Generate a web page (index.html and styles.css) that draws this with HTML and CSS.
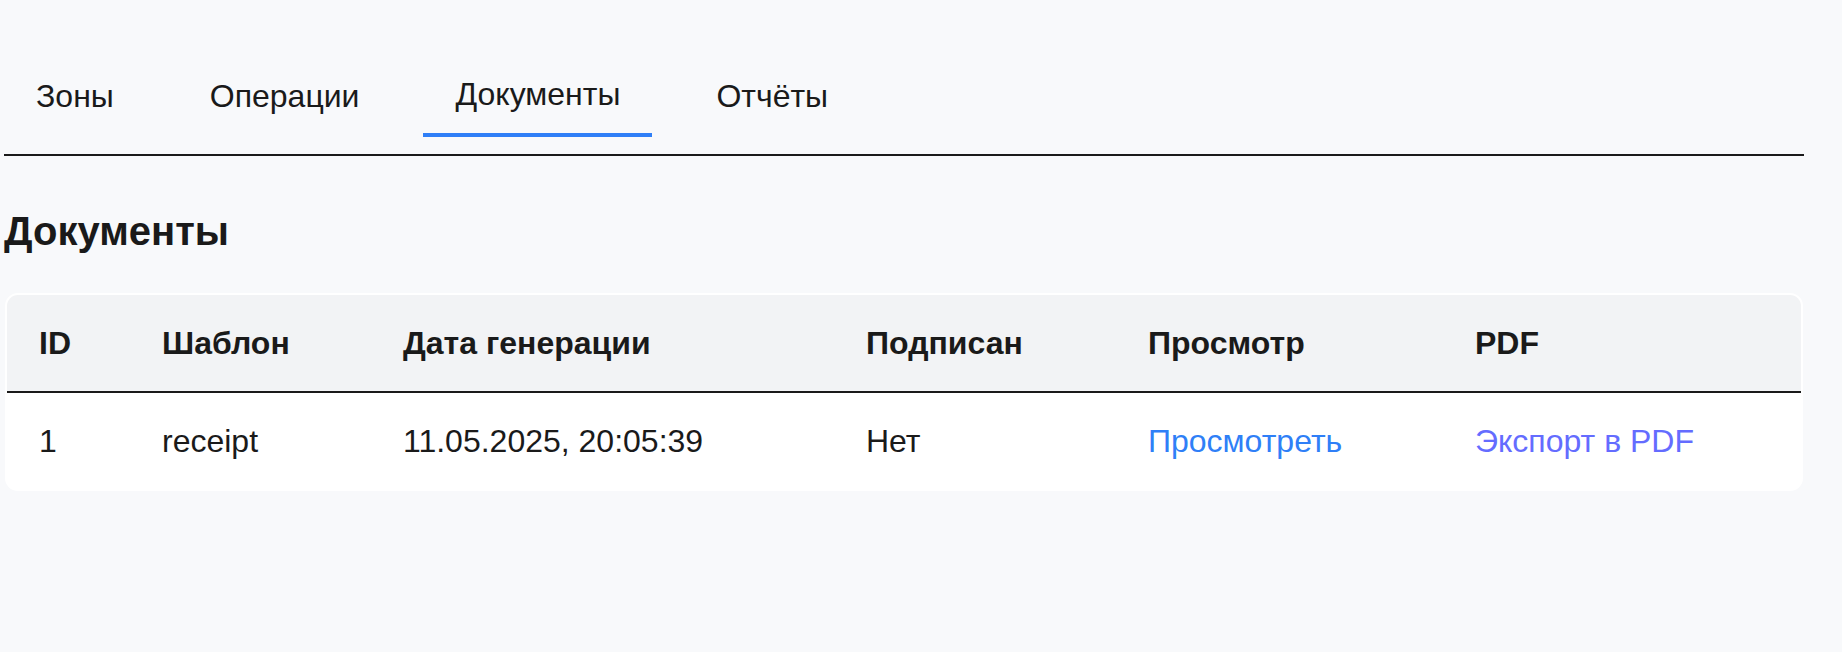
FILE: index.html
```html
<!DOCTYPE html>
<html lang="ru">
<head>
<meta charset="utf-8">
<title>Документы</title>
<link rel="stylesheet" href="styles.css">
</head>
<body>
<div class="page">
  <nav class="tabs">
    <a class="tab">Зоны</a>
    <a class="tab">Операции</a>
    <a class="tab tab-active">Документы</a>
    <a class="tab">Отчёты</a>
  </nav>
  <h2 class="title">Документы</h2>
  <div class="card">
    <table class="docs">
      <colgroup>
        <col class="c-id"><col class="c-tpl"><col class="c-date"><col class="c-sign"><col class="c-view"><col class="c-pdf">
      </colgroup>
      <thead>
        <tr><th>ID</th><th>Шаблон</th><th>Дата генерации</th><th>Подписан</th><th>Просмотр</th><th>PDF</th></tr>
      </thead>
      <tbody>
        <tr>
          <td>1</td><td>receipt</td><td>11.05.2025, 20:05:39</td><td>Нет</td>
          <td><a class="link-view">Просмотреть</a></td>
          <td><a class="link-pdf">Экспорт в PDF</a></td>
        </tr>
      </tbody>
    </table>
  </div>
</div>
</body>
</html>
```

FILE: styles.css
```css
html, body {
  margin: 0;
  background: #f8f9fb;
}
body {
  font-family: "Liberation Sans", Arial, sans-serif;
  color: #1a1a1a;
}
.page {
  width: 1800px;
  padding: 66px 0 0 4px;
}
.tabs {
  display: flex;
  gap: 32px;
  padding-bottom: 17px;
  border-bottom: 2px solid #1a1a1a;
}
.tab {
  font-size: 32px;
  line-height: 37px;
  padding: 12px 32px 18px;
  border-bottom: 4px solid transparent;
  color: #1a1a1a;
  cursor: pointer;
}
.tab-active {
  padding-top: 10px;
  padding-bottom: 20px;
  border-bottom-color: #2f7ff7;
}
.title {
  font-size: 40px;
  font-weight: bold;
  line-height: 46px;
  margin: 52px 0 39px;
}
.card {
  margin-left: 1px;
  width: 1794px;
  background: #ffffff;
  border: 2px solid #ffffff;
  border-radius: 13px;
  overflow: hidden;
}
.docs {
  width: 100%;
  border-collapse: collapse;
  table-layout: fixed;
  font-size: 32px;
}
.c-id { width: 123px; }
.c-tpl { width: 241px; }
.c-date { width: 463px; }
.c-sign { width: 282px; }
.c-view { width: 327px; }
.docs th, .docs td {
  text-align: left;
  padding: 30px 0 30px 32px;
  line-height: 36px;
}
.docs thead tr {
  background: #f2f3f5;
  border-bottom: 2px solid #1a1a1a;
}
.docs th {
  font-weight: bold;
}
.link-view { color: #2f7ff7; cursor: pointer; }
.link-pdf { color: #646cff; cursor: pointer; }
```
